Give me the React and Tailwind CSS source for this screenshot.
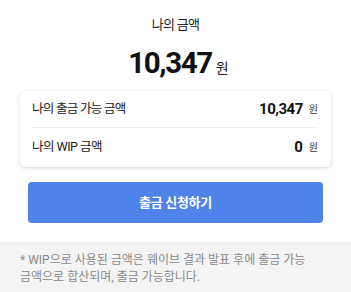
export default function App() {
  const font = { fontFamily: "Roboto, 'Noto Sans CJK KR', sans-serif" };
  return (
    <div className="w-[351px] h-[292px] bg-white flex flex-col overflow-hidden" style={font}>
      <div className="h-[44px] flex items-end justify-center pb-[13px]">
        <span className="text-[13px] leading-none text-[#222] tracking-[-0.7px]">나의 금액</span>
      </div>
      <div className="h-[40px] flex items-center justify-center pl-[6px]">
        <span className="text-[29.5px] font-bold leading-none text-[#111] tracking-[-1.4px]">10,347</span>
        <span className="text-[14px] leading-none text-[#222] ml-[4px] mt-[7px]">원</span>
      </div>
      <div className="mx-[20px] mt-[7px] h-[76px] rounded-[6px] bg-white shadow-[0_1px_4px_rgba(0,0,0,0.15)] pl-[12px] pr-[13px] flex flex-col">
        <div className="h-[37px] flex items-center justify-between border-b border-[#eee]">
          <span className="text-[12.5px] text-[#222] tracking-[-0.7px]">나의 출금 가능 금액</span>
          <span className="flex items-center">
            <span className="text-[15px] font-bold text-[#111] tracking-[-0.5px]">10,347</span>
            <span className="text-[10px] text-[#333] ml-[6px]">원</span>
          </span>
        </div>
        <div className="flex-1 flex items-center justify-between">
          <span className="text-[12.5px] text-[#222] tracking-[-0.5px]">나의 WIP 금액</span>
          <span className="flex items-center">
            <span className="text-[15px] font-bold text-[#111]">0</span>
            <span className="text-[10px] text-[#333] ml-[6px]">원</span>
          </span>
        </div>
      </div>
      <div className="mx-[28px] mt-[15px] h-[41px] rounded-[4px] bg-[#5083EA] flex items-center justify-center">
        <span className="text-[13px] font-bold text-white tracking-[-0.3px]">출금 신청하기</span>
      </div>
      <div className="mt-[19px] flex-1 bg-[#f4f4f4] px-[20px] pt-[10px]">
        <p className="text-[12px] leading-[17px] text-[#8a8a8a] break-keep">* WIP으로 사용된 금액은 웨이브 결과 발표 후에 출금 가능 금액으로 합산되며, 출금 가능합니다.</p>
      </div>
    </div>
  );
}
